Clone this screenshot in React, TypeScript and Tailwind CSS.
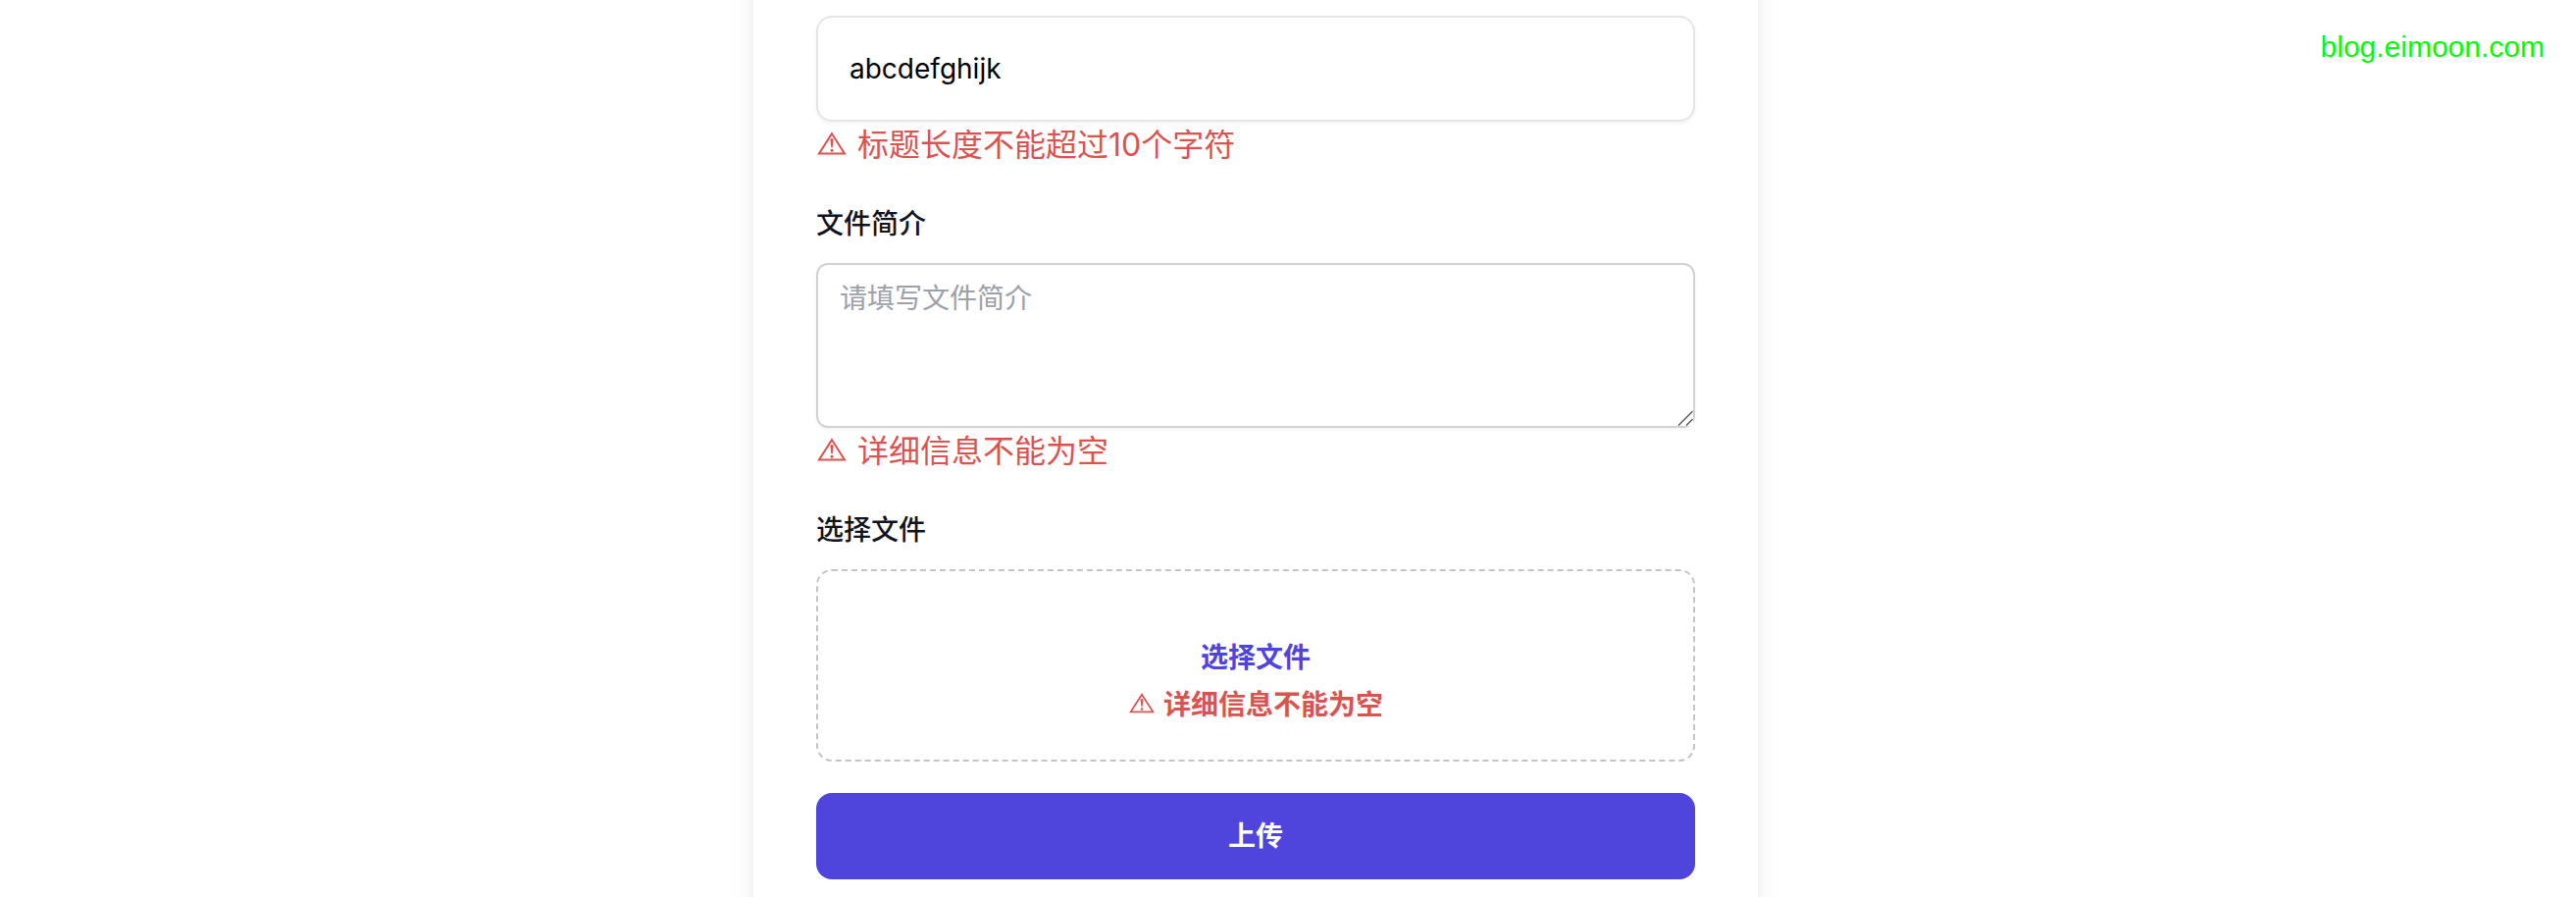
import { useRef, useState } from "react";

type ErrorMessageProps = {
  id: string;
  text: string;
  small?: boolean;
};

const WarningIcon = ({ className }: { className: string }) => (
  <svg
    viewBox="0 0 32 32"
    fill="none"
    stroke="currentColor"
    aria-hidden="true"
    className={className}
  >
    <path d="M16 4.2 L29 24.4 H3 Z" strokeWidth="2" />
    <path
      d="M14.4 10.6 a1.6 1.6 0 0 1 3.2 0 L16.6 18.6 h-1.2 Z"
      fill="currentColor"
      stroke="none"
    />
    <circle cx="16" cy="21.2" r="1.5" fill="currentColor" stroke="none" />
  </svg>
);

const ResizeGrip = () => (
  <svg
    viewBox="0 0 16 16"
    fill="none"
    stroke="#555555"
    strokeWidth="1.4"
    aria-hidden="true"
    className="pointer-events-none absolute right-0.5 bottom-0.5 size-4 bg-white"
  >
    <path d="M1 15.5 L15.5 1 M9 15.5 L15.5 9" />
  </svg>
);

const ErrorMessage = ({ id, text, small }: ErrorMessageProps) => (
  <p
    id={id}
    className={
      small
        ? "flex items-center justify-center gap-2 text-[28px] leading-[48px] font-bold text-[#d9534f]"
        : "flex items-center gap-2.5 text-[32px] leading-[48px] text-[#d9534f]"
    }
  >
    <WarningIcon className={small ? "size-7 shrink-0" : "size-8 shrink-0"} />
    <span>{text}</span>
  </p>
);

export default function App() {
  const [formData, setFormData] = useState({
    title: "abcdefghijk",
    description: "",
  });
  const fileRef = useRef<HTMLInputElement>(null);

  const handleChange = (
    e: React.ChangeEvent<HTMLInputElement | HTMLTextAreaElement>
  ) => {
    const { id, value } = e.target;
    setFormData({
      ...formData,
      [id]: value,
    });
  };

  const handleSubmit = (e: React.FormEvent<HTMLFormElement>) => {
    e.preventDefault();
  };

  return (
    <div className="relative h-screen overflow-hidden bg-white pr-[66px] font-[Inter,'Noto_Sans_CJK_SC',sans-serif]">
      <a
        href="#"
        className="absolute top-7 right-8 font-['Liberation_Sans',sans-serif] text-[30px] leading-10 text-[#00ff00]"
      >
        blog.eimoon.com
      </a>
      <form
        onSubmit={handleSubmit}
        className="mx-auto -mt-16 max-w-5xl bg-white px-16 pt-20 pb-32 shadow-[0_20px_30px_-6px_rgba(0,0,0,0.1),0_8px_12px_-4px_rgba(0,0,0,0.05)]"
      >
        <div className="mb-8">
          <input
            type="text"
            id="title"
            aria-label="标题"
            aria-describedby="title-error"
            value={formData.title}
            onChange={handleChange}
            className="block h-[108px] w-full rounded-2xl border-2 border-[#e5e5e5] px-8 text-[28px] text-black shadow-[0_2px_4px_rgba(0,0,0,0.05)] outline-none"
          />
          <ErrorMessage id="title-error" text="标题长度不能超过10个字符" />
        </div>

        <div className="mb-8">
          <label
            htmlFor="description"
            className="mb-4 block text-[28px] leading-[48px] font-medium text-[#111322]"
          >
            文件简介
          </label>
          <div className="relative">
            <textarea
              id="description"
              placeholder="请填写文件简介"
              aria-describedby="description-error"
              value={formData.description}
              onChange={handleChange}
              className="block h-[168px] w-full rounded-xl border-2 border-[#d1d1d1] px-[22px] py-3.5 text-[28px] leading-10 shadow-[0_2px_4px_rgba(0,0,0,0.05)] outline-none placeholder:text-[#9ca0a8]"
            />
            <ResizeGrip />
          </div>
          <ErrorMessage id="description-error" text="详细信息不能为空" />
        </div>

        <div className="mb-8">
          <label
            htmlFor="file"
            className="mb-4 block text-[28px] leading-[48px] font-medium text-[#111322]"
          >
            选择文件
          </label>
          <div className="rounded-2xl border-2 border-dashed border-[#c4c4c4] px-8 pt-16 pb-8">
            <input ref={fileRef} type="file" id="file" className="sr-only" />
            <button
              type="button"
              onClick={() => fileRef.current?.click()}
              className="mx-auto block text-[28px] leading-[48px] font-bold text-[#4f45dc]"
            >
              选择文件
            </button>
            <ErrorMessage id="file-error" text="详细信息不能为空" small />
          </div>
        </div>

        <button
          type="submit"
          className="block w-full rounded-2xl bg-[#4f45dc] py-5 text-[28px] leading-[48px] font-bold text-white"
        >
          上传
        </button>
      </form>
    </div>
  );
}
